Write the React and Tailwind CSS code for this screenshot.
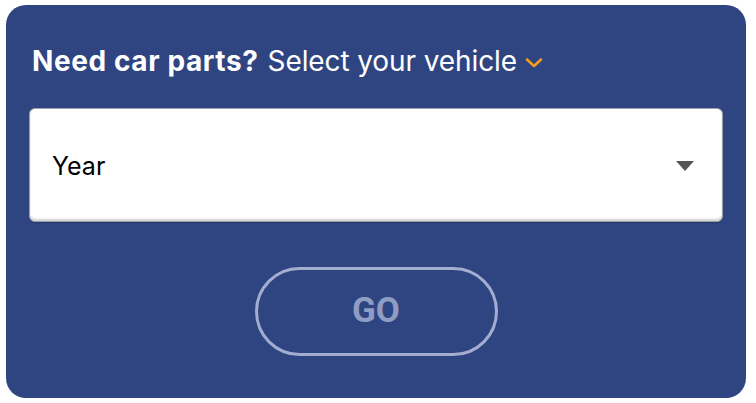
export default function App() {
  return (
    <div className="w-[756px] h-[403px] bg-white overflow-hidden pt-[5px] pl-[6px]" style={{ fontFamily: 'Inter, "Noto Sans", sans-serif' }}>
      <div className="w-[740px] h-[393px] rounded-[20px] bg-[#2f4582] px-[23px] pt-[38px] flex flex-col">
        <div className="flex items-center h-[36px] pl-[3px] text-white whitespace-nowrap">
          <span className="text-[28px] font-bold tracking-[0.6px]">Need car parts?</span>
          <span className="text-[28px] ml-[9px] tracking-[-0.1px]">Select your vehicle</span>
          <svg className="ml-[8px] mt-[4px]" width="18" height="12" viewBox="0 0 18 12" fill="none">
            <path d="M2 2.5 L9 9 L16 2.5" stroke="#f39a1c" strokeWidth="2.6" strokeLinecap="round" strokeLinejoin="round" />
          </svg>
        </div>
        <div className="mt-[29px] h-[114px] w-full rounded-[6px] bg-white border border-[#9aa0ad] shadow-[inset_0_-2px_2px_rgba(0,0,0,0.18),0_1px_1px_rgba(0,0,0,0.2)] flex items-center justify-between pl-[22px] pr-[28px]">
          <span className="text-[25px] text-black mt-[3px]" style={{ fontFamily: 'Inter, sans-serif' }}>Year</span>
          <svg className="mt-[2px]" width="18" height="10" viewBox="0 0 18 10">
            <path d="M0 0 L18 0 L9 10 Z" fill="#555" />
          </svg>
        </div>
        <div className="flex justify-center mt-[45px]">
          <div className="w-[243px] h-[89px] rounded-full border-[3px] border-[#a2add0] flex items-center justify-center">
            <span className="text-[35px] font-bold text-[#8f9cc4]" style={{ fontFamily: 'Roboto, sans-serif' }}>GO</span>
          </div>
        </div>
      </div>
    </div>
  );
}
